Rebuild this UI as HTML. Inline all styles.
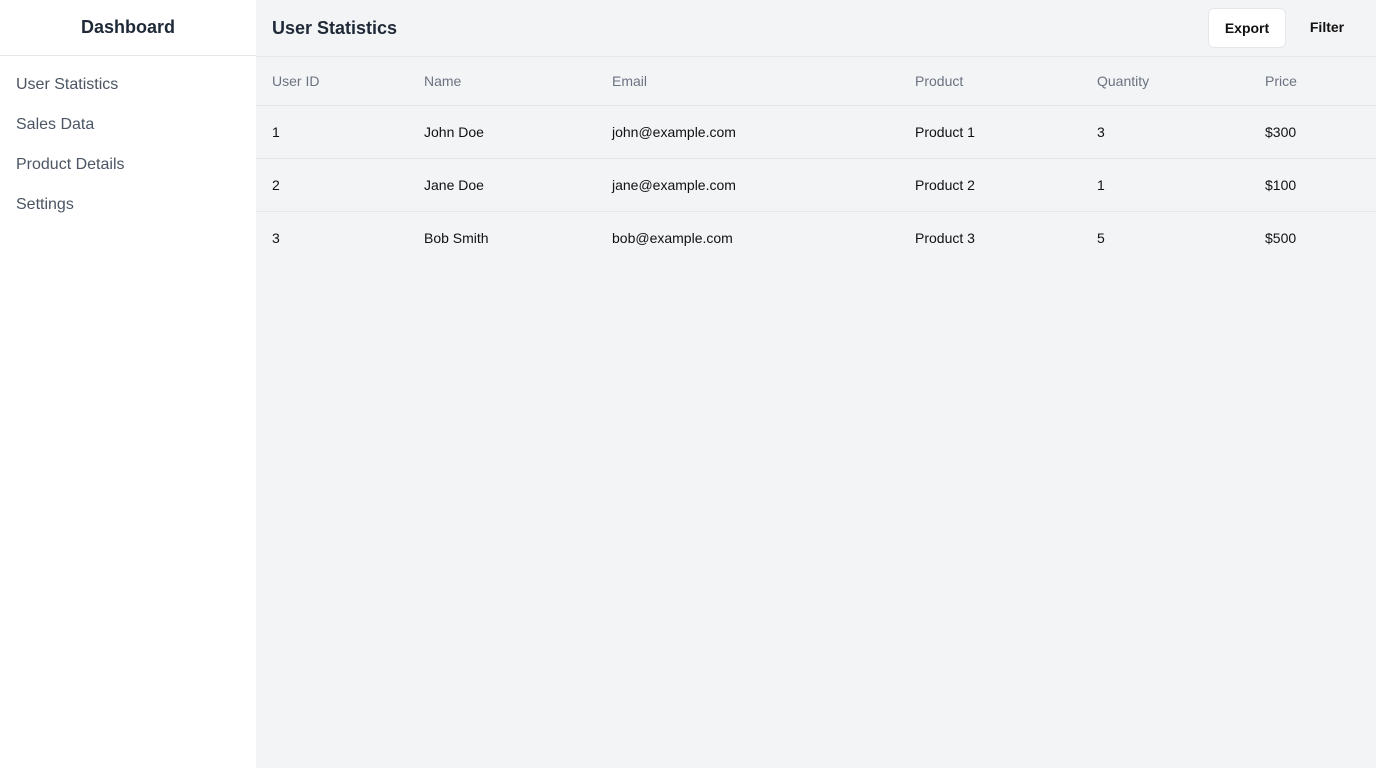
<!DOCTYPE html>
<html><head><style>
*{box-sizing:border-box;margin:0;padding:0}
body{width:1376px;height:768px;font-family:"Liberation Sans",sans-serif;background:#f3f4f6;position:relative;overflow:hidden}
.side{position:absolute;left:0;top:0;width:256px;height:768px;background:#fff}
.side h1{height:56px;border-bottom:1px solid #e5e7eb;font-size:18px;font-weight:bold;color:#1f2937;text-align:center;line-height:55px}
.side a{display:block;font-size:16px;color:#4b5563;padding-left:16px;height:40px;line-height:40px}
.side nav{padding-top:9px}
.main{position:absolute;left:256px;top:0;right:0}
.hd{height:57px;border-bottom:1px solid #e5e7eb;position:relative}
.hd h2{position:absolute;left:16px;top:0;line-height:56px;font-size:18px;font-weight:bold;color:#1f2937}
.btn{position:absolute;top:8px;height:40px;line-height:38px;font-size:14px;font-weight:bold;color:#111;text-align:center}
.b1{left:952px;width:78px;background:#fff;border:1px solid #e5e7eb;border-radius:6px}
.b2{left:1040px;width:62px}
table{border-collapse:collapse;width:100%;font-size:14px}
td,th{text-align:left;padding-left:16px;border-bottom:1px solid #e5e7eb}
th{height:48px;color:#6b7280;font-weight:normal}
td{height:53px;color:#111}
tr:last-child td{border-bottom:none}
</style></head><body>
<div class="side"><h1>Dashboard</h1><nav><a>User Statistics</a><a>Sales Data</a><a>Product Details</a><a>Settings</a></nav></div>
<div class="main">
<div class="hd"><h2>User Statistics</h2><div class="btn b1">Export</div><div class="btn b2">Filter</div></div>
<table>
<colgroup><col style="width:152px"><col style="width:188px"><col style="width:303px"><col style="width:182px"><col style="width:168px"><col></colgroup>
<tr><th>User ID</th><th>Name</th><th>Email</th><th>Product</th><th>Quantity</th><th>Price</th></tr>
<tr><td>1</td><td>John Doe</td><td>john@example.com</td><td>Product 1</td><td>3</td><td>$300</td></tr>
<tr><td>2</td><td>Jane Doe</td><td>jane@example.com</td><td>Product 2</td><td>1</td><td>$100</td></tr>
<tr><td>3</td><td>Bob Smith</td><td>bob@example.com</td><td>Product 3</td><td>5</td><td>$500</td></tr>
</table>
</div>
</body></html>
